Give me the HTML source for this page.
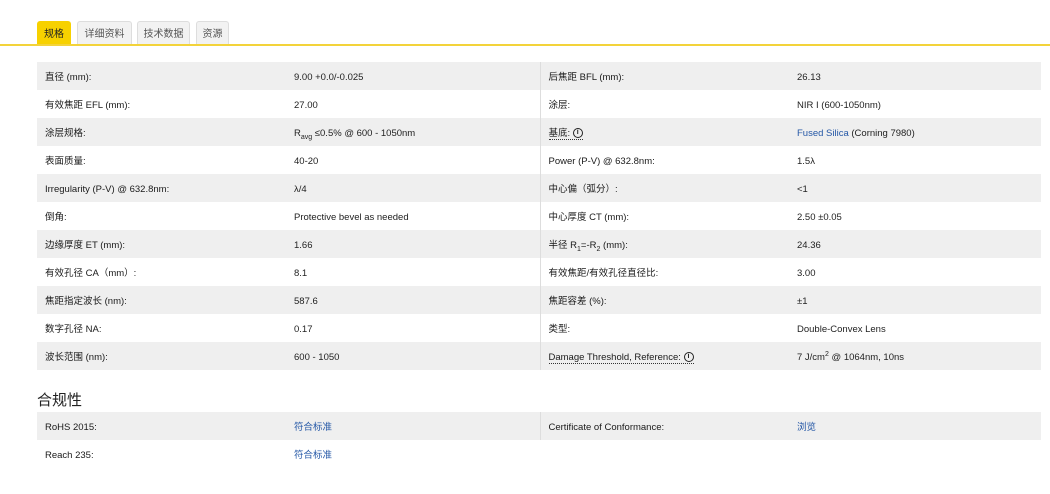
<!DOCTYPE html>
<html><head><meta charset="utf-8"><style>
body{margin:0;background:#fff;font-family:"Liberation Sans","Noto Sans CJK SC",sans-serif;color:#222;width:1050px;height:494px;overflow:hidden;position:relative}
.tabs{position:absolute;top:21px;left:37px;height:24px}
.tab{position:absolute;top:0;height:23px;line-height:25px;font-size:10px;text-align:center;background:#f2f2f2;border:1px solid #ddd;border-bottom:none;border-radius:3px 3px 0 0;color:#555;box-sizing:border-box}
.tab.on{background:#f7d100;border-color:#f7d100;color:#222;height:24px}
.line{position:absolute;top:44px;left:0;width:1050px;height:2px;background:#f3d33a}
table{position:absolute;left:37px;border-collapse:collapse;width:1004px;font-size:9.5px;table-layout:fixed}
td{height:25px;padding:3px 0 0 8px;vertical-align:middle;white-space:nowrap;line-height:12px}
tr:nth-child(odd) td{background:#efefef}
td.c3{border-left:1px solid #ddd}
.b{color:#1a1a1a}
a{color:#2457a6;text-decoration:none}
.dot{border-bottom:1px dotted #333}
.i{display:inline-block;width:8px;height:8px;border:1.3px solid #222;border-radius:50%;font-size:7px;line-height:8px;text-align:center;font-weight:bold;vertical-align:middle}
h3{position:absolute;left:37px;top:389px;margin:0;font-size:15px;font-weight:normal;color:#222}
sub,sup{font-size:7px;line-height:0}
</style></head><body>
<div class="tabs">
<div class="tab on" style="left:0;width:34px">规格</div>
<div class="tab" style="left:40px;width:55px">详细资料</div>
<div class="tab" style="left:100px;width:53px">技术数据</div>
<div class="tab" style="left:159px;width:33px">资源</div>
</div>
<div class="line"></div>
<table style="top:62px">
<colgroup><col style="width:249px"><col style="width:254px"><col style="width:249px"><col style="width:252px"></colgroup>
<tr><td class="b">直径 (mm):</td><td>9.00 +0.0/-0.025</td><td class="c3 b">后焦距 BFL (mm):</td><td>26.13</td></tr>
<tr><td class="b">有效焦距 EFL (mm):</td><td>27.00</td><td class="c3 b">涂层:</td><td>NIR I (600-1050nm)</td></tr>
<tr><td class="b">涂层规格:</td><td>R<sub>avg</sub> ≤0.5% @ 600 - 1050nm</td><td class="c3 b"><span class="dot">基底: <span class="i">i</span></span></td><td><a>Fused Silica</a> (Corning 7980)</td></tr>
<tr><td class="b">表面质量:</td><td>40-20</td><td class="c3 b">Power (P-V) @ 632.8nm:</td><td>1.5λ</td></tr>
<tr><td class="b">Irregularity (P-V) @ 632.8nm:</td><td>λ/4</td><td class="c3 b">中心偏（弧分）:</td><td>&lt;1</td></tr>
<tr><td class="b">倒角:</td><td>Protective bevel as needed</td><td class="c3 b">中心厚度 CT (mm):</td><td>2.50 ±0.05</td></tr>
<tr><td class="b">边缘厚度 ET (mm):</td><td>1.66</td><td class="c3 b">半径 R<sub>1</sub>=-R<sub>2</sub> (mm):</td><td>24.36</td></tr>
<tr><td class="b">有效孔径 CA（mm）:</td><td>8.1</td><td class="c3 b">有效焦距/有效孔径直径比:</td><td>3.00</td></tr>
<tr><td class="b">焦距指定波长 (nm):</td><td>587.6</td><td class="c3 b">焦距容差 (%):</td><td>±1</td></tr>
<tr><td class="b">数字孔径 NA:</td><td>0.17</td><td class="c3 b">类型:</td><td>Double-Convex Lens</td></tr>
<tr><td class="b">波长范围 (nm):</td><td>600 - 1050</td><td class="c3 b"><span class="dot">Damage Threshold, Reference: <span class="i">i</span></span></td><td>7 J/cm<sup>2</sup> @ 1064nm, 10ns</td></tr>
</table>
<h3>合规性</h3>
<table style="top:412px">
<colgroup><col style="width:249px"><col style="width:254px"><col style="width:249px"><col style="width:252px"></colgroup>
<tr><td class="b">RoHS 2015:</td><td><a>符合标准</a></td><td class="c3 b">Certificate of Conformance:</td><td><a>浏览</a></td></tr>
<tr><td class="b">Reach 235:</td><td><a>符合标准</a></td><td></td><td></td></tr>
</table>
</body></html>
